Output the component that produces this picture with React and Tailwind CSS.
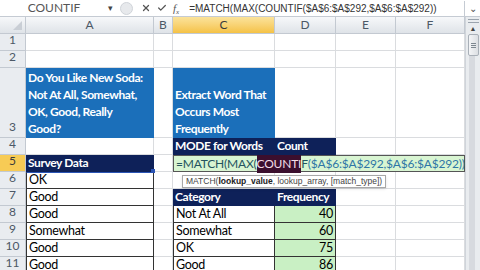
import { X, Check } from 'lucide-react';

const FONT = { fontFamily: 'Lato, "Open Sans", sans-serif' };

const ColHead = ({ label, active }) => (
  <div
    className={`flex items-center justify-center border-r border-b border-[#c3c9d1] text-[12px] ${
      active ? 'bg-gradient-to-b from-[#fbe39a] to-[#f5c244] text-[#3b3b3b]' : 'bg-gradient-to-b from-[#f7f8fa] to-[#dfe3e8] text-[#4c5866]'
    }`}
  >
    {label}
  </div>
);

const RowHead = ({ n, active }) => (
  <div
    className={`flex items-end justify-center pb-[1px] border-r border-b border-[#c3c9d1] text-[12px] ${
      active ? 'bg-[#f7cb55] text-[#3b3b3b]' : 'bg-[#e9ecf0] text-[#4c5866]'
    }`}
  >
    {n}
  </div>
);

const Cell = ({ children, className = '' }) => (
  <div
    className={`flex items-end px-[2px] text-[12.5px] tracking-[-0.3px] leading-[17px] overflow-hidden whitespace-nowrap border-r border-b ${
      className || 'border-[#dadcdf]'
    }`}
  >
    {children}
  </div>
);

const Empty = () => <Cell />;

const Head = ({ children }) => (
  <Cell className="bg-[#0e2159] text-white font-bold text-[12px] tracking-[-0.4px] border-[#0e2159]">{children}</Cell>
);

const boxed = 'border-[#333]';
const boxedL = 'border-[#333] border-l';

export default function App() {
  return (
    <div className="w-[480px] h-[270px] overflow-hidden bg-white flex flex-col" style={FONT}>
      {/* formula bar */}
      <div className="h-[17px] flex items-center border-b border-[#c5cbd3] bg-white shrink-0">
        <div className="w-[108px] text-center text-[12px] text-[#555]">COUNTIF</div>
        <div className="w-[10px] text-[9px] text-[#444]">▾</div>
        <div className="w-[13px] h-[13px] rounded-full bg-[#e7e9ec] border border-[#d0d4d9] mx-[2px]" />
        <div className="flex items-center gap-[6px] ml-[6px] text-[#555]">
          <X size={10} strokeWidth={3} />
          <Check size={10} strokeWidth={3} />
          <span className="text-[11px] italic" style={{ fontFamily: '"Liberation Serif", serif' }}>
            f<sub className="text-[7px]">x</sub>
          </span>
        </div>
        <div
          className="ml-[10px] flex-1 text-[10px] text-[#333] whitespace-nowrap overflow-hidden"
          style={{ fontFamily: '"Liberation Sans", sans-serif' }}
        >
          =MATCH(MAX(COUNTIF($A$6:$A$292,$A$6:$A$292))
        </div>
        <div className="w-[16px] h-[15px] border-l border-[#c5cbd3] flex items-center justify-center text-[10px] text-[#555]">⌄</div>
      </div>

      <div className="flex flex-1 min-h-0">
        {/* sheet grid */}
        <div
          className="grid w-[465px] shrink-0"
          style={{
            gridTemplateColumns: '26px 128px 19px 102px 61px 60px 69px',
            gridTemplateRows: '17px 17px 17px 70px 17px 17px 17px 17px 17px 17px 17px 17px',
          }}
        >
          {/* header row */}
          <div className="relative border-r border-b border-[#c3c9d1] bg-gradient-to-b from-[#f7f8fa] to-[#dfe3e8]">
            <div className="absolute right-[3px] bottom-[3px] w-0 h-0 border-l-[9px] border-l-transparent border-b-[9px] border-b-[#c9ced5]" />
          </div>
          <ColHead label="A" />
          <ColHead label="B" />
          <ColHead label="C" active />
          <ColHead label="D" />
          <ColHead label="E" />
          <ColHead label="F" />

          {/* row 1 */}
          <RowHead n="1" />
          <Empty /><Empty /><Empty /><Empty /><Empty /><Empty />

          {/* row 2 */}
          <RowHead n="2" />
          <Empty /><Empty /><Empty /><Empty /><Empty /><Empty />

          {/* row 3 */}
          <RowHead n="3" />
          <Cell className="bg-[#1b6fba] text-white font-bold text-[12px] tracking-[-0.4px] border-[#1b6fba]">
            <div>
              Do You Like New Soda:<br />
              Not At All, Somewhat,<br />
              OK, Good, Really<br />
              Good?
            </div>
          </Cell>
          <Empty />
          <Cell className="bg-[#1b6fba] text-white font-bold text-[12px] tracking-[-0.4px] border-[#1b6fba]">
            <div>
              Extract Word That<br />
              Occurs Most<br />
              Frequently
            </div>
          </Cell>
          <Empty /><Empty /><Empty />

          {/* row 4 */}
          <RowHead n="4" />
          <Empty /><Empty />
          <Head>MODE for Words</Head>
          <Head>Count</Head>
          <Empty /><Empty />

          {/* row 5 */}
          <RowHead n="5" active />
          <div className="relative flex items-end pl-[2px] bg-[#0e2159] text-white font-bold text-[12px] tracking-[-0.4px] leading-[17px] border-b border-r border-[#0e2159]">
            Survey Data
            <div className="absolute right-[-2px] bottom-[-2px] w-[4px] h-[4px] bg-[#2b55b5]" />
          </div>
          <Empty />
          <div className="col-span-4 relative flex items-center pl-[2px] bg-[#d8f5d2] border border-[#555] text-[12px] tracking-[-0.2px] whitespace-nowrap">
            <span className="text-[#24545e]">=MATCH(MAX(</span>
            <span className="bg-[#3b0f2e] text-[#f3dde8]">COUNTI</span>
            <span className="text-[#24545e]">F</span>
            <span className="text-[#2f76a6]">($A$6:$A$292,$A$6:$A$292))</span>
            <div
              className="absolute left-[8px] top-[19px] z-10 px-[3px] h-[13px] flex items-center bg-white border border-[#a8a8a8] shadow-sm text-[8.5px] tracking-normal text-[#444] whitespace-nowrap"
              style={{ fontFamily: '"Liberation Sans", sans-serif' }}
            >
              MATCH(<b className="text-[#222]">lookup_value</b>, lookup_array, [match_type])
            </div>
          </div>

          {/* row 6 */}
          <RowHead n="6" />
          <Cell className="border-[#333] border-l border-t border-t-[#2b55b5]">OK</Cell>
          <Empty /><Empty /><Empty /><Empty /><Empty />

          {/* row 7 */}
          <RowHead n="7" />
          <Cell className={boxedL}>Good</Cell>
          <Empty />
          <Head>Category</Head>
          <Head>Frequency</Head>
          <Empty /><Empty />

          {/* row 8 */}
          <RowHead n="8" />
          <Cell className={boxedL}>Good</Cell>
          <Empty />
          <Cell className={boxedL}>Not At All</Cell>
          <Cell className={`justify-end bg-[#c9f0c4] ${boxed}`}>40</Cell>
          <Empty /><Empty />

          {/* row 9 */}
          <RowHead n="9" />
          <Cell className={boxedL}>Somewhat</Cell>
          <Empty />
          <Cell className={boxedL}>Somewhat</Cell>
          <Cell className={`justify-end bg-[#c9f0c4] ${boxed}`}>60</Cell>
          <Empty /><Empty />

          {/* row 10 */}
          <RowHead n="10" />
          <Cell className={boxedL}>Good</Cell>
          <Empty />
          <Cell className={boxedL}>OK</Cell>
          <Cell className={`justify-end bg-[#c9f0c4] ${boxed}`}>75</Cell>
          <Empty /><Empty />

          {/* row 11 */}
          <RowHead n="11" />
          <Cell className={boxedL}>Good</Cell>
          <Empty />
          <Cell className={boxedL}>Good</Cell>
          <Cell className={`justify-end bg-[#c9f0c4] ${boxed}`}>86</Cell>
          <Empty /><Empty />
        </div>

        {/* vertical scrollbar */}
        <div className="w-[15px] flex flex-col items-center bg-[#e9ecef] border-l border-[#cfd4da]">
          <div className="w-[11px] h-[4px] mt-[2px] border-y border-[#9aa3ad]" />
          <div className="h-[11px] text-[7px] text-[#444] leading-[11px]">▲</div>
          <div className="w-[11px] h-[22px] rounded-[2px] bg-gradient-to-r from-[#f4f5f7] to-[#dcdfe3] border border-[#a9b0b8] flex flex-col items-center justify-center gap-[1px]">
            <div className="w-[5px] h-px bg-[#7d8790]" />
            <div className="w-[5px] h-px bg-[#7d8790]" />
            <div className="w-[5px] h-px bg-[#7d8790]" />
          </div>
          <div className="flex-1 w-[6px] mr-[2px] bg-[#d7dadf]" />
        </div>
      </div>
    </div>
  );
}
